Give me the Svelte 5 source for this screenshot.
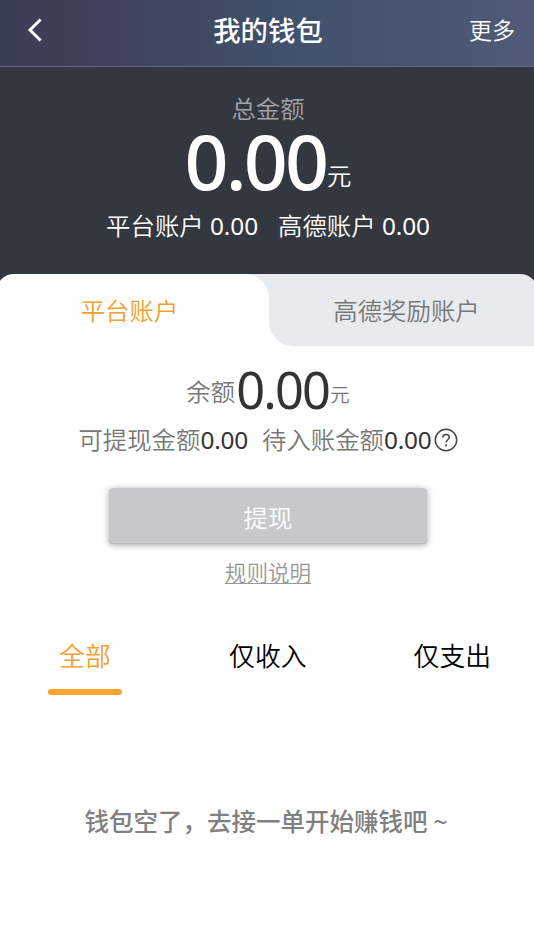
<script>
  const accountTabs = ['平台账户', '高德奖励账户'];
  const filters = ['全部', '仅收入', '仅支出'];
  let account = $state(0);
  let filter = $state(0);
</script>

<div class="page">
  <header>
    <button class="back" aria-label="返回">
      <svg width="16" height="24" viewBox="0 0 16 24"><path d="M13.6 1.5 3 12l10.6 10.5" /></svg>
    </button>
    <h1>我的钱包</h1>
    <button class="more">更多</button>
  </header>

  <section class="total">
    <div class="label">总金额</div>
    <div class="amount"><span class="num">0.00</span><span class="unit">元</span></div>
    <div class="split">
      <span>平台账户 <span class="num">0.00</span></span>
      <span>高德账户 <span class="num">0.00</span></span>
    </div>
  </section>

  <nav class="tabs">
    {#each accountTabs as name, i}
      <button class:active={account === i} onclick={() => (account = i)}>{name}</button>
    {/each}
  </nav>

  <main>
    <div class="balance"><span class="caption">余额</span><span class="num">0.00</span><span class="unit">元</span></div>
    <div class="detail">
      <span>可提现金额<span class="num">0.00</span></span>
      <span class="pending">待入账金额<span class="num">0.00</span></span>
      <svg width="24" height="24" viewBox="0 0 24 24">
        <circle cx="12" cy="12" r="10.7" />
        <path d="M8.8 9.6c0-4.2 6.5-4.1 6.5-.3 0 2.4-3.2 2.5-3.2 5.2M12.1 16.3v2.2" />
      </svg>
    </div>
    <button class="withdraw">提现</button>
    <button class="rules">规则说明</button>

    <nav class="filters">
      {#each filters as name, i}
        <button class:active={filter === i} onclick={() => (filter = i)}>{name}</button>
      {/each}
    </nav>
    <p class="empty">钱包空了，去接一单开始赚钱吧<span>~</span></p>
  </main>
</div>

<style>
  .page {
    width: 534px;
    height: 928px;
    overflow: hidden;
    background: #fefefe;
    font-family: "Noto Sans", "Noto Sans CJK SC", sans-serif;
    font-weight: 350;
    font-size: 24.4px;
    color: #777;
    display: flex;
    flex-direction: column;
  }
  button {
    border: 0;
    margin: 0;
    padding: 0;
    background: none;
    font: inherit;
    color: inherit;
  }
  header {
    box-sizing: border-box;
    height: 67px;
    flex: none;
    padding: 0 19px 6px 21px;
    display: grid;
    grid-template-columns: 1fr auto 1fr;
    align-items: center;
    color: #fff;
    background: linear-gradient(90deg, #3a3e55 0, #3e4055 14%, #41435f 23%, #3c4862 29%, #3f4a60 36%, #40506b 52%, #485570 76%, #4f5b77 100%);
    border-bottom: 1px solid #66687b;
  }
  .back { justify-self: start; display: flex; margin-left: 6px; }
  .back path { fill: none; stroke: #fff; stroke-width: 3; }
  h1 { margin: 0; padding-top: 2px; font-size: 27.4px; line-height: 40px; font-weight: 500; }
  .more { justify-self: end; font-size: 23px; line-height: 36px; }

  .total {
    height: 207px;
    flex: none;
    background: #33373f;
    color: #fff;
    display: flex;
    flex-direction: column;
    align-items: center;
    padding-left: 2px;
  }
  .label { margin-top: 26px; line-height: 32px; color: #a2a4a9; }
  .amount { height: 64px; margin-top: 4px; line-height: 32px; white-space: nowrap; }
  .amount .num { font-size: 77px; line-height: 64px; font-weight: 500; letter-spacing: -2.9px; margin-right: 1px; }
  .amount .unit { vertical-align: 5px; }
  .split { margin-top: 17px; line-height: 32px; display: flex; gap: 20px; white-space: nowrap; }
  .num { font-weight: 400; }
  .split .num { letter-spacing: -.1px; }
  .detail .num { letter-spacing: -.2px; }

  .tabs {
    height: 72px;
    flex: none;
    display: flex;
    margin: 0 -4px;
    background:
      linear-gradient(#e8ebee, #e8ebee) 244px 0 / 48px 36px no-repeat,
      linear-gradient(#fefefe, #fefefe) 244px 36px / 60px 36px no-repeat,
      #33373f;
  }
  .tabs button { background: #e8ebee; line-height: 74px; }
  .tabs button:first-child { width: 273px; border-radius: 18px 0 0; padding-left: 4px; padding-right: 10px; }
  .tabs button:last-child { width: 269px; border-radius: 0 18px 0 24px; padding-left: 10px; padding-right: 4px; }
  .tabs .active { color: #f0a12f; background: #fefefe; }
  .tabs .active:first-child { border-radius: 18px 24px 0 0; }

  main { flex: 1; display: flex; flex-direction: column; align-items: center; padding-left: 2px; }
  .balance { height: 50px; margin-top: 19px; line-height: 32px; white-space: nowrap; }
  .balance .num { font-size: 50.5px; line-height: 50px; color: #333; letter-spacing: -1.8px; }
  .balance .caption { vertical-align: 8px; margin-right: 1px; }
  .balance .unit { font-size: 19.5px; margin-left: 1px; vertical-align: 7px; }
  .detail { height: 32px; line-height: 32px; margin-top: 9px; display: flex; align-items: center; white-space: nowrap; }
  .detail .num { color: #333; }
  .pending { margin-left: 14px; }
  .detail svg { fill: none; stroke: #444; stroke-width: 1.5; margin-left: 2px; }
  .withdraw {
    width: 318px;
    height: 56px;
    margin-top: 32px;
    border-radius: 4px;
    background: #c5c9cc;
    box-shadow: 0 1px 6px rgba(0, 0, 0, .35), inset 0 -1px 0 #b9bcbe;
    color: #fff;
  }
  .rules {
    margin-top: 15px;
    line-height: 28px;
    font-size: 21.6px;
    color: #999;
    text-decoration: underline;
    text-decoration-thickness: 1px;
    text-underline-offset: 2px;
  }
  .filters {
    align-self: stretch;
    margin-top: 49px;
    display: flex;
    justify-content: space-between;
    padding: 0 43px 0 46px;
    color: #000;
    font-size: 25.8px;
    line-height: 40px;
  }
  .filters button { height: 59px; display: flex; flex-direction: column; justify-content: space-between; align-items: center; min-width: 74px; }
  .filters .active { color: #f0a12f; }
  .filters .active::after { content: ""; width: 74px; height: 6px; border-radius: 3px; background: #f7a52b; }
  .empty { margin: 107px 4px 0 0; line-height: 40px; font-size: 24.5px; font-weight: 500; color: #808080; }
  .empty span { margin-left: 6px; }
</style>
